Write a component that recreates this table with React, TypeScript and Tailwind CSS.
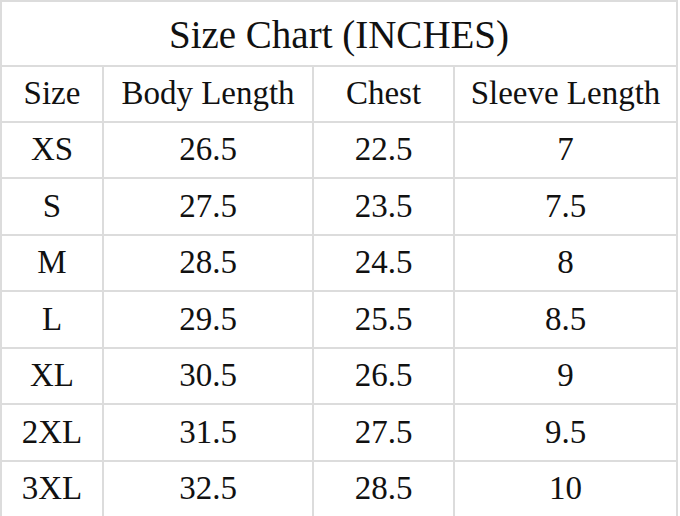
const rows = [
  ["XS", "26.5", "22.5", "7"],
  ["S", "27.5", "23.5", "7.5"],
  ["M", "28.5", "24.5", "8"],
  ["L", "29.5", "25.5", "8.5"],
  ["XL", "30.5", "26.5", "9"],
  ["2XL", "31.5", "27.5", "9.5"],
  ["3XL", "32.5", "28.5", "10"],
];

const cell = "border-2 border-[#dcdcdc] text-center p-0";

export default function App() {
  return (
    <div className="w-[680px] h-[516px] bg-white overflow-hidden">
      <table
        className="w-[678px] border-collapse text-[#111] table-fixed"
        style={{ fontFamily: '"Liberation Serif", "Times New Roman", serif' }}
      >
        <colgroup>
          <col className="w-[102px]" />
          <col className="w-[210px]" />
          <col className="w-[141px]" />
          <col />
        </colgroup>
        <thead>
          <tr className="h-[64px]">
            <th colSpan={4} className={`${cell} text-[39px] font-normal pt-1`}>
              Size Chart (INCHES)
            </th>
          </tr>
          <tr className="h-[56px]">
            {["Size", "Body Length", "Chest", "Sleeve Length"].map((h) => (
              <th key={h} className={`${cell} text-[33px] font-normal`}>
                {h}
              </th>
            ))}
          </tr>
        </thead>
        <tbody>
          {rows.map((r) => (
            <tr key={r[0]} className="h-[56.5px]">
              {r.map((v, i) => (
                <td key={i} className={`${cell} text-[33px]`}>
                  {v}
                </td>
              ))}
            </tr>
          ))}
        </tbody>
      </table>
    </div>
  );
}
